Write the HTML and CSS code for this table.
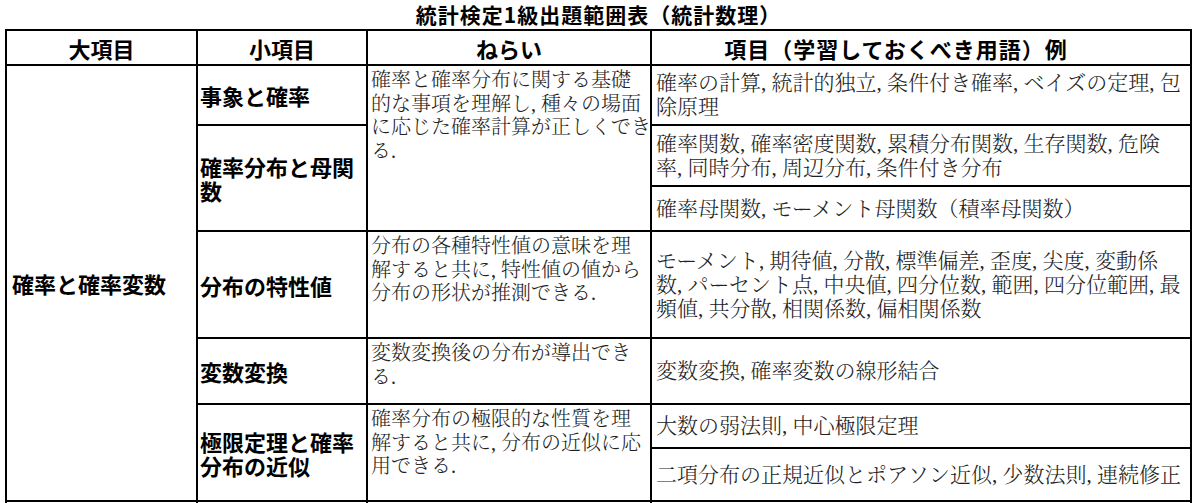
FILE: index.html
```html
<!DOCTYPE html>
<html lang="ja">
<head>
<meta charset="utf-8">
<title>統計検定1級出題範囲表（統計数理）</title>
<link rel="stylesheet" href="styles.css">
</head>
<body>
<main class="page">
  <h1 class="title">統計検定1級出題範囲表（統計数理）</h1>
  <div class="table" role="table">
    <div class="cell head">大項目</div>
    <div class="cell head">小項目</div>
    <div class="cell head">ねらい</div>
    <div class="cell head head-terms">項目（学習しておくべき用語）例</div>

    <div class="cell major span7">確率と確率変数</div>
    <div class="cell minor">事象と確率</div>
    <div class="cell aim span3">確率と確率分布に関する基礎<br>的な事項を理解し, 種々の場面<br>に応じた確率計算が正しくでき<br>る.</div>
    <div class="cell terms">確率の計算, 統計的独立, 条件付き確率, ベイズの定理, 包<br>除原理</div>

    <div class="cell minor span2">確率分布と母関数</div>
    <div class="cell terms">確率関数, 確率密度関数, 累積分布関数, 生存関数, 危険<br>率, 同時分布, 周辺分布, 条件付き分布</div>
    <div class="cell terms">確率母関数, モーメント母関数（積率母関数）</div>

    <div class="cell minor">分布の特性値</div>
    <div class="cell aim">分布の各種特性値の意味を理<br>解すると共に, 特性値の値から<br>分布の形状が推測できる.</div>
    <div class="cell terms">モーメント, 期待値, 分散, 標準偏差, 歪度, 尖度, 変動係<br>数, パーセント点, 中央値, 四分位数, 範囲, 四分位範囲, 最<br>頻値, 共分散, 相関係数, 偏相関係数</div>

    <div class="cell minor">変数変換</div>
    <div class="cell aim">変数変換後の分布が導出でき<br>る.</div>
    <div class="cell terms">変数変換, 確率変数の線形結合</div>

    <div class="cell minor span2">極限定理と確率分布の近似</div>
    <div class="cell aim span2">確率分布の極限的な性質を理<br>解すると共に, 分布の近似に応<br>用できる.</div>
    <div class="cell terms">大数の弱法則, 中心極限定理</div>
    <div class="cell terms">二項分布の正規近似とポアソン近似, 少数法則, 連続修正</div>

    <div class="cell major"></div>
    <div class="cell minor"></div>
    <div class="cell aim"></div>
    <div class="cell terms"></div>
  </div>
</main>
</body>
</html>
```

FILE: styles.css
```css
* {
  box-sizing: border-box;
}

html,
body {
  margin: 0;
  padding: 0;
  overflow: hidden;
  background: #fff;
}

body {
  font-family: "Noto Sans CJK JP", "Noto Sans", sans-serif;
  color: #000;
}

.page {
  width: 1192px;
  padding-left: 5px;
}

.title {
  margin: 0;
  height: 29px;
  line-height: 29px;
  font-size: 21px;
  font-weight: 700;
  letter-spacing: 1px;
  text-align: center;
}

.table {
  display: grid;
  width: 1187px;
  grid-template-columns: 189px 168px 282px 538px;
  grid-template-rows: 33px 58px 59px 43px 105px 64px 42px 51px 40px;
  gap: 2px;
  padding: 2px;
  background: #000;
}

.cell {
  display: flex;
  align-items: center;
  background: #fff;
  overflow: hidden;
}

.head {
  justify-content: center;
  font-size: 22px;
  font-weight: 700;
  line-height: 26px;
}

.head-terms {
  padding-right: 50px;
  letter-spacing: 1px;
}

.major {
  padding-left: 5px;
  font-size: 22px;
  font-weight: 700;
  line-height: 24px;
}

.minor {
  padding-left: 2px;
  font-size: 22px;
  font-weight: 700;
  line-height: 24px;
}

.aim {
  align-items: flex-start;
  padding: 3px 0 0 3px;
  font-family: "Liberation Serif", "Noto Serif CJK JP", "Noto Sans CJK JP", serif;
  font-size: 20px;
  font-weight: 300;
  line-height: 23.5px;
  white-space: nowrap;
  color: #222;
}

.terms {
  padding-left: 4px;
  font-family: "Liberation Serif", "Noto Serif CJK JP", "Noto Sans CJK JP", serif;
  font-size: 21px;
  font-weight: 300;
  line-height: 24px;
  white-space: nowrap;
  color: #222;
}

.span2 {
  grid-row: span 2;
}

.span3 {
  grid-row: span 3;
}

.span7 {
  grid-row: span 7;
}
```
